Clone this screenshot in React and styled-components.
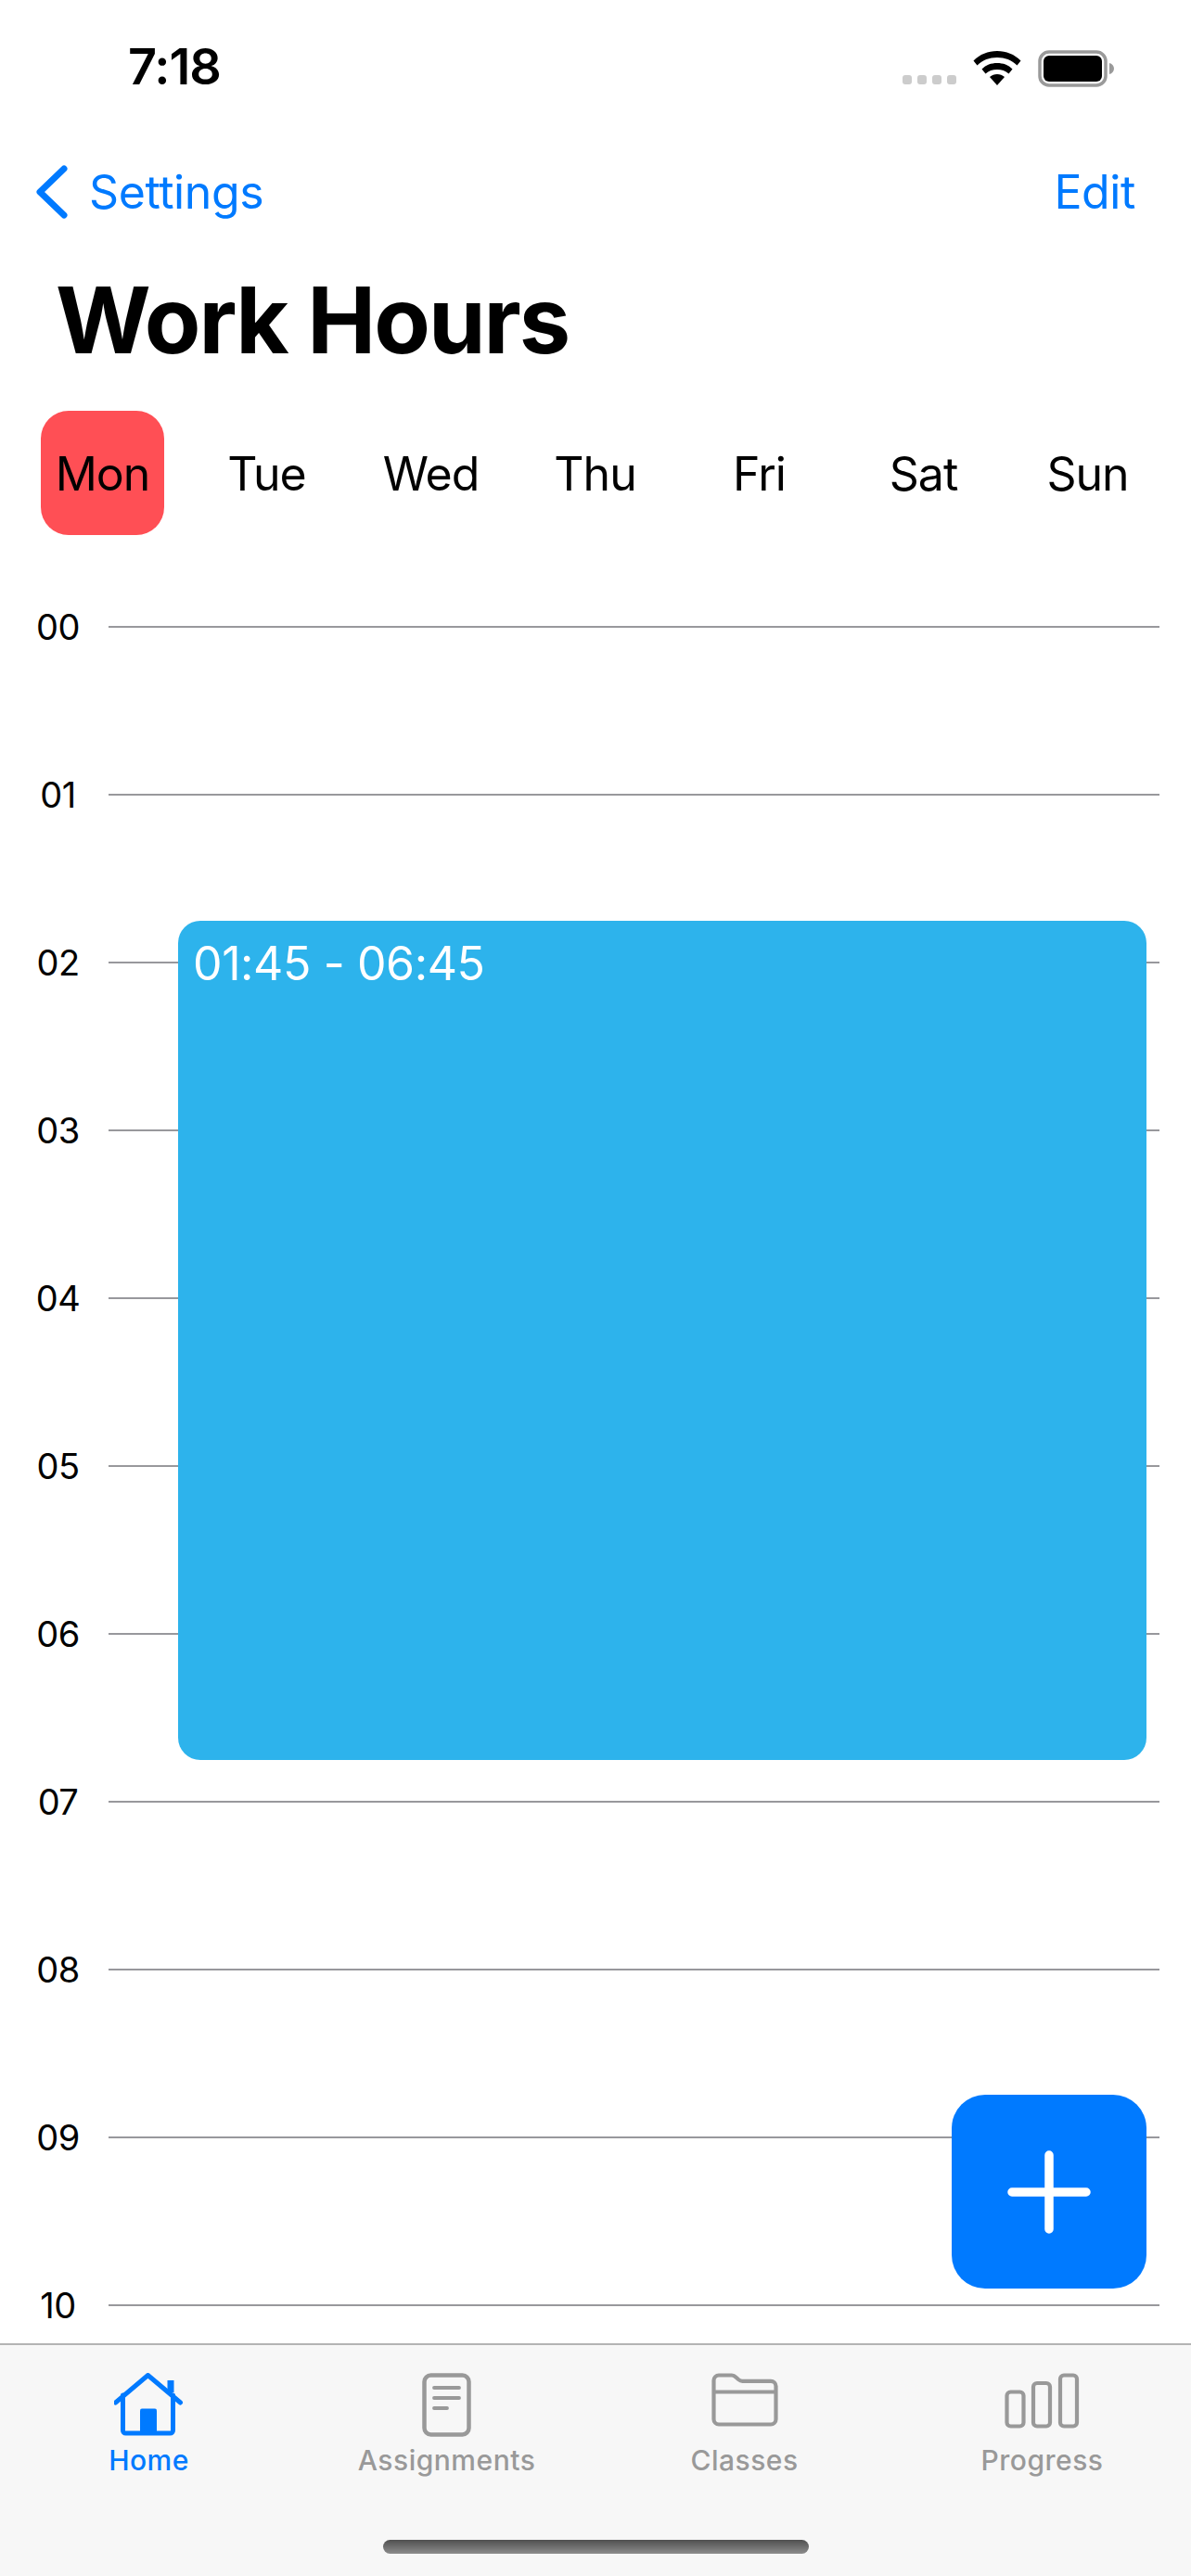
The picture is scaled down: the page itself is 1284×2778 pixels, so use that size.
import React from "react";
import styled, { createGlobalStyle } from "styled-components";

const HOUR = 181;
const GRID_TOP = 30;
const BLUE = "#007aff";
const GRAY = "#999999";

const Global = createGlobalStyle`
  html, body { margin: 0; padding: 0; background: #fff; }
  * { box-sizing: border-box; }
  #root { font-family: Inter, "Liberation Sans", sans-serif; }
`;

const Page = styled.div`
  position: relative;
  width: 1284px;
  height: 2778px;
  overflow: hidden;
  display: flex;
  flex-direction: column;
  background: #fff;
  color: #000;
`;

const StatusBar = styled.header`
  height: 150px;
  flex: none;
  padding: 42px 82px 0 138px;
  display: flex;
  justify-content: space-between;
  align-items: flex-start;
`;
const Clock = styled.span`
  font-size: 54px;
  line-height: 60px;
  font-weight: 600;
  letter-spacing: -1px;
`;
const StatusIcons = styled.div`
  display: flex;
  align-items: flex-start;
  margin-top: 12px;
  gap: 18px;
`;
const SignalDots = styled.div`
  display: flex;
  gap: 6px;
  margin-top: 27px;
`;
const SignalDot = styled.i`
  width: 10px;
  height: 10px;
  border-radius: 3px;
  background: #cccccc;
`;

const NavBar = styled.nav`
  height: 115px;
  flex: none;
  padding: 0 60px 2px 39px;
  display: flex;
  justify-content: space-between;
  align-items: center;
`;
const NavLink = styled.a`
  display: flex;
  align-items: center;
  gap: 23px;
  color: ${BLUE};
  font-size: 50px;
  line-height: 60px;
  letter-spacing: -0.4px;
`;

const Title = styled.h1`
  margin: 25px 0 43px;
  padding-left: 60px;
  font-size: 99px;
  line-height: 110px;
  font-weight: 700;
  letter-spacing: -2px;
`;

const DayRow = styled.div`
  flex: none;
  display: grid;
  grid-template-columns: repeat(7, 177px);
  padding-left: 22px;
`;
const Day = styled.div`
  justify-self: center;
  width: 133px;
  height: 134px;
  padding-top: 2px;
  display: flex;
  align-items: center;
  justify-content: center;
  border-radius: 30px;
  font-size: 50px;
  letter-spacing: -1px;
  background: ${(p) => (p.$active ? "#ff4f55" : "transparent")};
`;

const Schedule = styled.main`
  position: relative;
  flex: 1;
  min-height: 0;
  margin-top: 69px;
  overflow: hidden;
`;
const HourRow = styled.div`
  height: ${HOUR}px;
  display: flex;
  align-items: flex-start;
  padding: 0 34px 0 20px;
`;
const HourLabel = styled.span`
  width: 85px;
  margin-right: 12px;
  flex: none;
  text-align: center;
  font-size: 38px;
  line-height: 60px;
  letter-spacing: -0.5px;
`;
const HourLine = styled.div`
  flex: 1;
  height: 2px;
  margin-top: 29px;
  background: #98989c;
`;
const WorkBlock = styled.div`
  position: absolute;
  left: 192px;
  width: 1044px;
  top: ${(p) => GRID_TOP + p.$start * HOUR}px;
  height: ${(p) => (p.$end - p.$start) * HOUR}px;
  padding: 16px 16px;
  border-radius: 24px;
  background: #2db3ec;
  color: #fff;
  font-size: 50px;
  line-height: 60px;
  letter-spacing: -0.4px;
`;

const Fab = styled.button`
  position: absolute;
  right: 48px;
  bottom: 310px;
  width: 210px;
  height: 209px;
  border: 0;
  border-radius: 36px;
  background: ${BLUE};
  display: flex;
  align-items: center;
  justify-content: center;
  padding: 0;
`;

const TabBar = styled.footer`
  flex: none;
  height: 251px;
  display: grid;
  grid-template-columns: repeat(4, 1fr);
  align-items: start;
  padding-top: 30px;
  background: #f7f7f7;
  border-top: 2px solid #b4b4b4;
`;
const Tab = styled.div`
  display: flex;
  flex-direction: column;
  align-items: center;
  color: ${(p) => (p.$active ? BLUE : GRAY)};
`;
const TabIcon = styled.div`
  height: 69px;
  display: flex;
  align-items: flex-start;
`;
const TabLabel = styled.span`
  margin-top: 5px;
  font-size: 30px;
  line-height: 40px;
  letter-spacing: 0.5px;
  font-weight: 500;
`;
const HomeIndicator = styled.div`
  position: absolute;
  left: 413px;
  bottom: 24px;
  width: 459px;
  height: 15px;
  border-radius: 8px;
  background: linear-gradient(180deg, #505050, #8c8c8c);
`;

const WifiIcon = () => (
  <svg width="52" height="38" viewBox="0 0 52 38" fill="#000">
    <path d="M0.500 11.500C7.500 4.500 16 1 26 1s18.500 3.500 25.500 10.500l-4 5C41.500 10.800 34.500 8 26 8S10.500 10.800 4.500 16.500z" />
    <path d="M9.500 20.500C14 16 19.500 14 26 14s12 2 16.500 6.500l-4 5C35 22.300 31 21 26 21s-9 1.300-12.500 4.500z" />
    <path d="M18 29c2.300-2 5-3 8-3s5.700 1 8 3l-8 9z" />
  </svg>
);

const BatteryIcon = () => (
  <svg width="83" height="40" viewBox="0 0 83 40">
    <rect x="2" y="2" width="71" height="36" rx="10" fill="none" stroke="#9a9a9a" strokeWidth="3.500" />
    <rect x="6" y="6" width="63" height="28" rx="6" fill="#000" />
    <path d="M77 14c3 .8 5 3 5 6s-2 5.200-5 6z" fill="#9a9a9a" />
  </svg>
);

const Chevron = () => (
  <svg width="34" height="58" viewBox="0 0 34 58" fill="none" stroke={BLUE} strokeWidth="7" strokeLinecap="round" strokeLinejoin="round">
    <path d="M30 4L4 29l26 25" />
  </svg>
);

const HomeGlyph = () => (
  <svg width="76" height="68" viewBox="1.500 0 76 68" fill="none" stroke="currentColor" strokeWidth="5" strokeLinecap="round" strokeLinejoin="round">
    <path d="M3 32L38 2.500 73 32" />
    <path d="M11 24v38a3 3 0 0 0 3 3h48a3 3 0 0 0 3-3V24" />
    <path d="M62.500 8v13" strokeWidth="7" strokeLinecap="butt" />
    <path d="M29.500 65V40.500a2 2 0 0 1 2-2h14a2 2 0 0 1 2 2V65z" fill="currentColor" stroke="none" />
  </svg>
);

const AssignmentGlyph = () => (
  <svg width="53" height="69" viewBox="0 0 53 69" fill="none" stroke="currentColor" strokeWidth="4.500" strokeLinecap="round">
    <rect x="2.500" y="2.500" width="48" height="64" rx="7" />
    <path d="M13 16h27M13 27h27M13 38h14" strokeWidth="3.800" />
  </svg>
);

const FolderGlyph = () => (
  <svg width="72" height="58" viewBox="0 0 72 58" fill="none" stroke="currentColor" strokeWidth="4.200" strokeLinejoin="round">
    <path d="M2.500 20V8a5.500 5.500 0 0 1 5.500-5.500h14c2 0 3 .7 4.500 2.200L29 7c1.500 1.300 2.500 1.800 4.500 1.800H64a5.500 5.500 0 0 1 5.500 5.500V50a5.500 5.500 0 0 1-5.500 5.500H8A5.500 5.500 0 0 1 2.500 50z" />
    <path d="M2.500 20.500h67" />
  </svg>
);

const BarsGlyph = () => (
  <svg width="81" height="60" viewBox="0 0 81 60" fill="none" stroke="currentColor" strokeWidth="4.200">
    <rect x="2.500" y="20.500" width="18" height="37" rx="4" />
    <rect x="31" y="11" width="18" height="46.500" rx="4" />
    <rect x="60" y="2.500" width="18" height="55" rx="4" />
  </svg>
);

const PlusGlyph = () => (
  <svg width="90" height="90" viewBox="0 0 90 90" stroke="#fff" strokeWidth="9.500" strokeLinecap="round">
    <path d="M45 5v80M5 45h80" />
  </svg>
);

const days = ["Mon", "Tue", "Wed", "Thu", "Fri", "Sat", "Sun"];
const hours = ["00", "01", "02", "03", "04", "05", "06", "07", "08", "09", "10"];
const tabs = [
  { label: "Home", Icon: HomeGlyph, active: true },
  { label: "Assignments", Icon: AssignmentGlyph },
  { label: "Classes", Icon: FolderGlyph },
  { label: "Progress", Icon: BarsGlyph },
];

export default function App() {
  return (
    <Page>
      <Global />
      <StatusBar>
        <Clock>7:18</Clock>
        <StatusIcons>
          <SignalDots>
            <SignalDot />
            <SignalDot />
            <SignalDot />
            <SignalDot />
          </SignalDots>
          <WifiIcon />
          <BatteryIcon />
        </StatusIcons>
      </StatusBar>
      <NavBar>
        <NavLink>
          <Chevron />
          Settings
        </NavLink>
        <NavLink>Edit</NavLink>
      </NavBar>
      <Title>Work Hours</Title>
      <DayRow>
        {days.map((d, i) => (
          <Day key={d} $active={i === 0}>
            {d}
          </Day>
        ))}
      </DayRow>
      <Schedule>
        {hours.map((h) => (
          <HourRow key={h}>
            <HourLabel>{h}</HourLabel>
            <HourLine />
          </HourRow>
        ))}
        <WorkBlock $start={1.75} $end={6.75}>
          01:45 - 06:45
        </WorkBlock>
      </Schedule>
      <Fab aria-label="Add">
        <PlusGlyph />
      </Fab>
      <TabBar>
        {tabs.map(({ label, Icon, active }) => (
          <Tab key={label} $active={active}>
            <TabIcon>
              <Icon />
            </TabIcon>
            <TabLabel>{label}</TabLabel>
          </Tab>
        ))}
      </TabBar>
      <HomeIndicator />
    </Page>
  );
}
